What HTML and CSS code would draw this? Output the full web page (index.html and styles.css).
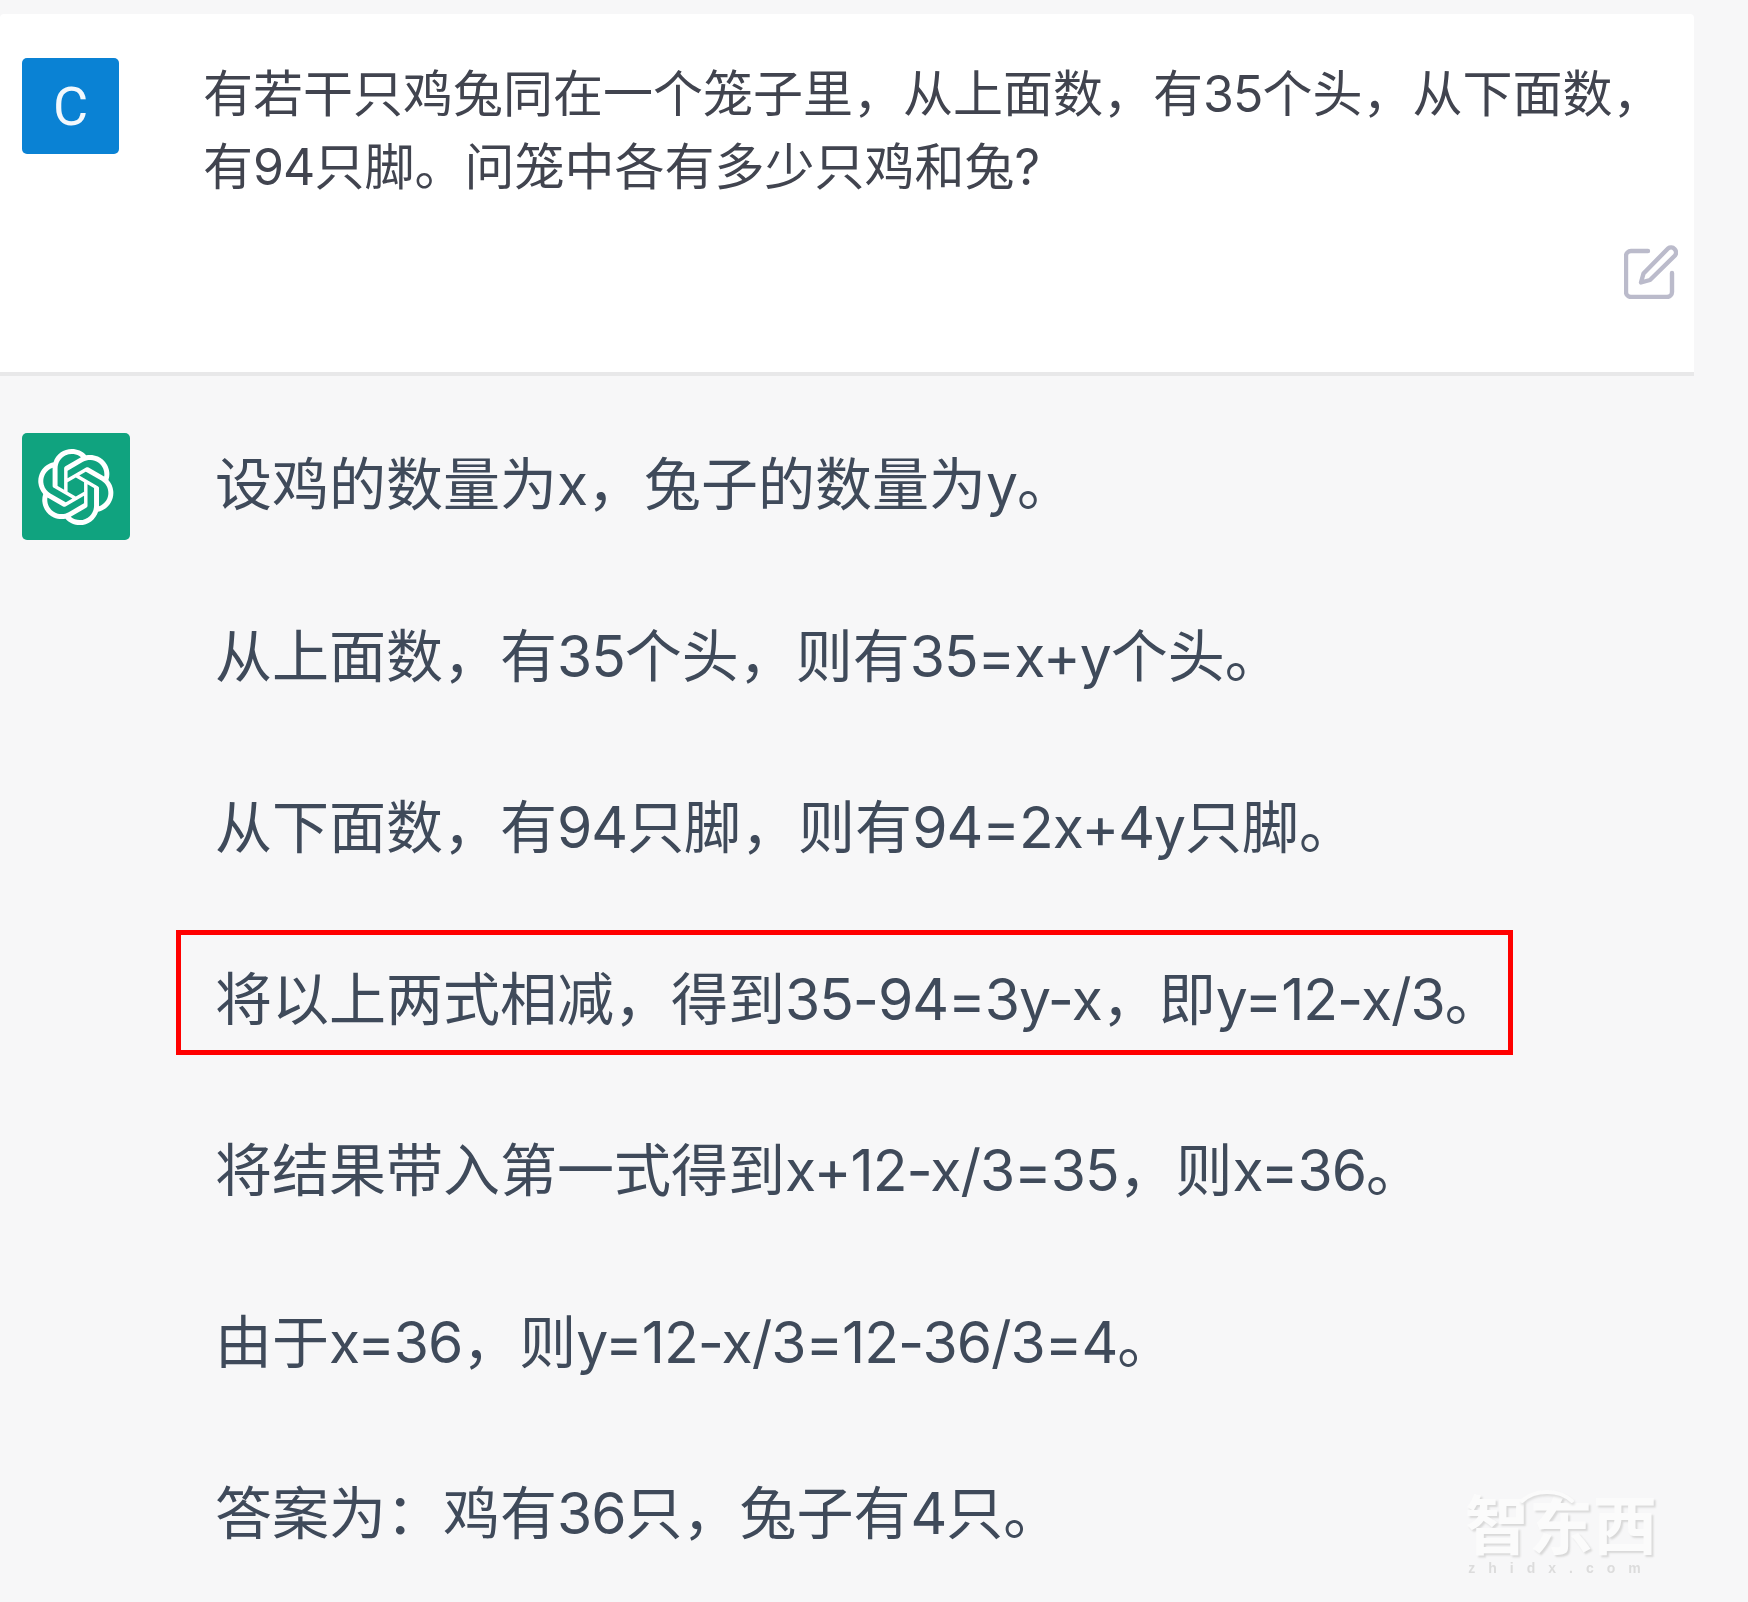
FILE: index.html
```html
<!DOCTYPE html>
<html lang="zh-CN">
<head>
<meta charset="utf-8">
<title>ChatGPT</title>
<link rel="stylesheet" href="styles.css">
</head>
<body>
<main class="page">
  <section class="row-user">
    <div class="avatar-user">C</div>
    <div class="user-body">
      <p class="user-text">有若干只鸡兔同在一个笼子里，从上面数，有<span class="lat">35</span>个头，从下面数，<br>有<span class="lat">94</span>只脚。问笼中各有多少只鸡和兔<span class="lat">?</span></p>
      <svg class="edit-icon" viewBox="0 0 54 55" fill="none" stroke="currentColor" stroke-width="4.4" stroke-linecap="round" stroke-linejoin="round">
        <path d="M24 7H7a5 5 0 0 0-5 5v36a5 5 0 0 0 5 5h36a5 5 0 0 0 5-5V29"/>
        <path d="M44 4.500a5 5 0 0 1 7 7L26 36l-9 2.500 2.500-9z"/>
      </svg>
    </div>
  </section>
  <section class="row-bot">
    <div class="avatar-bot">
      <svg class="logo" viewBox="0 0 41 41" fill="currentColor">
        <path d="M37.5324 16.8707C37.9808 15.5241 38.1363 14.0974 37.9886 12.6859C37.8409 11.2744 37.3934 9.91076 36.676 8.68622C35.6126 6.83404 33.9882 5.3676 32.0373 4.4985C30.0864 3.62941 27.9098 3.40259 25.8215 3.85078C24.8796 2.7893 23.7219 1.94125 22.4257 1.36341C21.1295 0.785575 19.7249 0.491269 18.3058 0.500197C16.1708 0.495044 14.0893 1.16803 12.3614 2.42214C10.6335 3.67624 9.34853 5.44666 8.6917 7.47815C7.30085 7.76286 5.98686 8.3414 4.8377 9.17505C3.68854 10.0087 2.73073 11.0782 2.02839 12.312C0.956464 14.1591 0.498905 16.2988 0.721698 18.4228C0.944492 20.5467 1.83612 22.5449 3.268 24.1293C2.81966 25.4759 2.66413 26.9026 2.81182 28.3141C2.95951 29.7256 3.40701 31.0892 4.12437 32.3138C5.18791 34.1659 6.8123 35.6322 8.76321 36.5013C10.7141 37.3704 12.8907 37.5973 14.9789 37.1492C15.9208 38.2107 17.0786 39.0587 18.3747 39.6366C19.6709 40.2144 21.0755 40.5087 22.4946 40.4998C24.6307 40.5054 26.7133 39.8321 28.4418 38.5772C30.1704 37.3223 31.4556 35.5506 32.1119 33.5179C33.5027 33.2332 34.8167 32.6547 35.9659 31.821C37.115 30.9874 38.0728 29.9178 38.7752 28.684C39.8458 26.8371 40.3023 24.6979 40.0789 22.5748C39.8556 20.4517 38.9639 18.4544 37.5324 16.8707ZM22.4978 37.8849C20.7443 37.8874 19.0459 37.2733 17.6994 36.1501C17.7601 36.117 17.8666 36.0586 17.936 36.0161L25.9004 31.4156C26.1003 31.3019 26.2663 31.137 26.3813 30.9378C26.4964 30.7386 26.5563 30.5124 26.5549 30.2825V19.0542L29.9213 20.998C29.9389 21.0068 29.9541 21.0198 29.9656 21.0359C29.977 21.052 29.9842 21.0707 29.9867 21.0902V30.3889C29.9842 32.375 29.1946 34.2791 27.7909 35.6841C26.3872 37.0892 24.4838 37.8806 22.4978 37.8849ZM6.39227 31.0064C5.51397 29.4888 5.19742 27.7107 5.49804 25.9832C5.55718 26.0187 5.66048 26.0818 5.73461 26.1244L13.699 30.7248C13.8975 30.8408 14.1233 30.902 14.3532 30.902C14.583 30.902 14.8088 30.8408 15.0073 30.7248L24.731 25.1103V28.9979C24.7321 29.0177 24.7283 29.0376 24.7199 29.0556C24.7115 29.0736 24.6988 29.0893 24.6829 29.1012L16.6317 33.7497C14.9096 34.7416 12.8643 35.0097 10.9447 34.4954C9.02506 33.9811 7.38785 32.7263 6.39227 31.0064ZM4.29707 13.6194C5.17156 12.0998 6.55279 10.9364 8.19885 10.3327C8.19885 10.4013 8.19491 10.5228 8.19491 10.6071V19.808C8.19351 20.0378 8.25334 20.2638 8.36823 20.4629C8.48312 20.6619 8.64893 20.8267 8.84863 20.9404L18.5723 26.5542L15.206 28.4979C15.1894 28.5089 15.1703 28.5155 15.1505 28.5173C15.1307 28.5191 15.1107 28.516 15.0924 28.5082L7.04046 23.8557C5.32135 22.8601 4.06716 21.2235 3.55289 19.3046C3.03862 17.3858 3.30624 15.3413 4.29707 13.6194ZM31.955 20.0556L22.2312 14.4411L25.5976 12.4981C25.6142 12.4872 25.6333 12.4805 25.6531 12.4787C25.6729 12.4769 25.6928 12.4801 25.7111 12.4879L33.7631 17.1364C34.9967 17.849 36.0017 18.8982 36.6606 20.1613C37.3194 21.4244 37.6047 22.849 37.4832 24.2684C37.3617 25.6878 36.8382 27.0432 35.9743 28.1759C35.1103 29.3086 33.9415 30.1717 32.6047 30.6641C32.6047 30.5947 32.6047 30.4733 32.6047 30.3889V21.188C32.6066 20.9586 32.5474 20.7328 32.4332 20.5338C32.319 20.3348 32.154 20.1698 31.955 20.0556ZM35.3055 15.0128C35.2464 14.9765 35.1431 14.9142 35.069 14.8717L27.1045 10.2712C26.906 10.1554 26.6803 10.0943 26.4504 10.0943C26.2206 10.0943 25.9948 10.1554 25.7963 10.2712L16.0726 15.8858V11.9982C16.0715 11.9783 16.0753 11.9585 16.0837 11.9405C16.0921 11.9225 16.1048 11.9068 16.1207 11.8949L24.1719 7.25025C25.4053 6.53903 26.8158 6.19376 28.2383 6.25482C29.6608 6.31589 31.0364 6.78077 32.2044 7.59508C33.3723 8.40939 34.2842 9.53945 34.8334 10.8531C35.3826 12.1667 35.5464 13.6095 35.3055 15.0128ZM14.2424 21.9419L10.8752 19.9981C10.8576 19.9893 10.8423 19.9763 10.8309 19.9602C10.8195 19.9441 10.8122 19.9254 10.8098 19.9058V10.6071C10.8107 9.18295 11.2173 7.78848 11.9819 6.58696C12.7466 5.38544 13.8377 4.42659 15.1275 3.82264C16.4173 3.21869 17.8524 2.99464 19.2649 3.1767C20.6775 3.35876 22.0089 3.93941 23.1034 4.85067C23.0427 4.88379 22.937 4.94215 22.8668 4.98473L14.9024 9.58517C14.7025 9.69878 14.5366 9.86356 14.4215 10.0626C14.3065 10.2616 14.2466 10.4877 14.2479 10.7175L14.2424 21.9419ZM16.071 17.9991L20.4018 15.4978L24.7325 17.9975V22.9985L20.4018 25.4983L16.071 22.9985V17.9991Z"/>
      </svg>
    </div>
    <div class="bot-body">
      <p class="bot-line">设鸡的数量为<span class="lat">x</span>，兔子的数量为<span class="lat">y</span>。</p>
      <p class="bot-line">从上面数，有<span class="lat">35</span>个头，则有<span class="lat">35=x+y</span>个头。</p>
      <p class="bot-line">从下面数，有<span class="lat">94</span>只脚，则有<span class="lat">94=2x+4y</span>只脚。</p>
      <p class="bot-line highlight">将以上两式相减，得到<span class="lat">35-94=3y-x</span>，即<span class="lat">y=12-x/3</span>。</p>
      <p class="bot-line">将结果带入第一式得到<span class="lat">x+12-x/3=35</span>，则<span class="lat">x=36</span>。</p>
      <p class="bot-line">由于<span class="lat">x=36</span>，则<span class="lat">y=12-x/3=12-36/3=4</span>。</p>
      <p class="bot-line">答案为：鸡有<span class="lat">36</span>只，兔子有<span class="lat">4</span>只。</p>
    </div>
  </section>
  <div class="watermark">
    <svg class="wm-arc" viewBox="0 0 56 18" fill="none" stroke="#fbfbfb" stroke-width="4" stroke-linecap="round">
      <path d="M3 15C16 3 40 3 53 15"/>
    </svg>
    <span class="wm-name">智东西</span>
    <span class="wm-url">zhidx.com</span>
  </div>
</main>
</body>
</html>
```

FILE: styles.css
```css
* { box-sizing: border-box; }

html, body {
  margin: 0;
  height: 100%;
  background: #f7f7f8;
}

p { margin: 0; }

.page {
  position: relative;
  height: 1602px;
  padding-top: 14px;
  overflow: hidden;
  font-family: "Liberation Sans", "Noto Sans CJK SC", sans-serif;
  color: #3f4a5a;
  filter: blur(0.7px);
}

.lat {
  font-family: "Inter", "Liberation Sans", sans-serif;
  letter-spacing: -0.018em;
}

.row-user {
  display: flex;
  width: 1694px;
  height: 362px;
  padding: 44px 16px 0 22px;
  background: #fff;
  border-bottom: 4px solid #e8e8e9;
  border-top-left-radius: 4px;
  border-top-right-radius: 4px;
}

.avatar-user {
  flex: none;
  display: flex;
  align-items: center;
  justify-content: center;
  width: 97px;
  height: 96px;
  margin-right: 84px;
  border-radius: 5px;
  background: #0a82d4;
  color: #f2f8fd;
  font-family: "Roboto", sans-serif;
  font-size: 54px;
}

.user-body {
  flex: 1;
  display: flex;
  flex-direction: column;
}

.user-text {
  height: 144px;
  font-size: 50px;
  line-height: 72px;
  color: #41444f;
  white-space: nowrap;
}

.edit-icon {
  align-self: flex-end;
  width: 54px;
  height: 55px;
  margin-top: 42px;
  color: #bbbbcb;
}

.row-bot {
  display: flex;
  padding: 57px 0 0 22px;
}

.avatar-bot {
  flex: none;
  display: flex;
  align-items: center;
  justify-content: center;
  width: 108px;
  height: 107px;
  margin-right: 85px;
  border-radius: 5px;
  background: #10a37f;
  color: #fff;
}

.logo {
  width: 78px;
  height: 78px;
}

.bot-body {
  display: flex;
  flex-direction: column;
  gap: 99.5px;
  padding-top: 16px;
}

.bot-line {
  font-size: 57px;
  line-height: 72px;
  white-space: nowrap;
}

.highlight {
  position: relative;
}

.highlight::after {
  content: "";
  box-sizing: border-box;
  position: absolute;
  left: -39px;
  top: -34px;
  width: 1337px;
  height: 125px;
  border: 5px solid #f00;
}

.watermark {
  position: absolute;
  left: 1462px;
  top: 1486px;
  display: flex;
  flex-direction: column;
  align-items: center;
  width: 198px;
  color: #fbfbfb;
}

.wm-arc {
  width: 56px;
  height: 18px;
  margin: 0 0 -8px -28px;
  filter: drop-shadow(1px 2px 1px #dcdcdc);
}

.wm-name {
  font-size: 64px;
  line-height: 62px;
  font-weight: 700;
  white-space: nowrap;
  text-shadow: 2px 2px 2px #d8d8d8;
}

.wm-url {
  margin-top: 2px;
  font-size: 14px;
  line-height: 16px;
  font-weight: 700;
  letter-spacing: 13px;
  color: #dcdcdc;
}
```
